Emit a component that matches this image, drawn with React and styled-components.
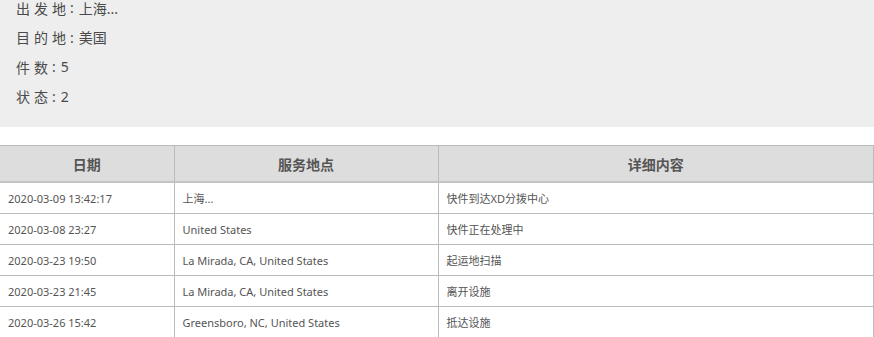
import React from 'react'
import styled, { createGlobalStyle } from 'styled-components'

const GlobalStyle = createGlobalStyle`
  html, body {
    margin: 0;
    padding: 0;
    background: #fff;
    overflow: hidden;
  }
  body {
    font-family: "Noto Sans", "Noto Sans CJK SC", sans-serif;
  }
`

const info = [
  { label: '出发地', value: '上海...' },
  { label: '目的地', value: '美国' },
  { label: '件数', value: '5' },
  { label: '状态', value: '2' }
]

const rows = [
  ['2020-03-09 13:42:17', '上海...', '快件到达XD分拨中心'],
  ['2020-03-08 23:27', 'United States', '快件正在处理中'],
  ['2020-03-23 19:50', 'La Mirada, CA, United States', '起运地扫描'],
  ['2020-03-23 21:45', 'La Mirada, CA, United States', '离开设施'],
  ['2020-03-26 15:42', 'Greensboro, NC, United States', '抵达设施']
]

export default function App() {
  return (
    <Page>
      <GlobalStyle />
      <Summary>
        <InfoList>
          {info.map(item => (
            <InfoLine key={item.label}>
              <Label>{item.label}</Label>
              <Colon>:</Colon>
              <span>{item.value}</span>
            </InfoLine>
          ))}
        </InfoList>
      </Summary>

      <Table>
        <colgroup>
          <col style={{ width: 174 }} />
          <col style={{ width: 264 }} />
          <col />
        </colgroup>
        <thead>
          <tr>
            <Th>日期</Th>
            <Th>服务地点</Th>
            <Th>详细内容</Th>
          </tr>
        </thead>
        <tbody>
          {rows.map((r, i) => (
            <tr key={i}>
              {r.map((c, j) => (
                <Td key={j}>{c}</Td>
              ))}
            </tr>
          ))}
        </tbody>
      </Table>
    </Page>
  )
}

const Page = styled.div`
  width: 874px;
  height: 337px;
  overflow: hidden;
`

const Summary = styled.div`
  background: #eeeeee;
  height: 127px;
  overflow: hidden;
  margin-bottom: 18px;
`

const InfoList = styled.div`
  margin-top: -7px;
  padding-left: 16px;
`

const InfoLine = styled.div`
  display: flex;
  align-items: center;
  height: 29.5px;
  font-size: 14px;
  color: #4a4a4a;
`

const Label = styled.span`
  letter-spacing: 4px;
`

const Colon = styled.span`
  margin: 0 5px 0 0;
`

const Table = styled.table`
  width: 874px;
  border-collapse: collapse;
  table-layout: fixed;
  font-family: "Noto Sans", "Noto Sans CJK SC", sans-serif;
`

const Th = styled.th`
  height: 35px;
  padding: 0;
  background: #dddddd;
  border: 1px solid #bbbbbb;
  border-bottom: 2px solid #c4c4c4;
  font-size: 14px;
  font-weight: bold;
  color: #555;
  text-align: center;
  &:first-child { border-left: none; }
`

const Td = styled.td`
  height: 30px;
  padding: 0 0 0 8px;
  border: 1px solid #bbbbbb;
  font-size: 11px;
  color: #555;
  white-space: nowrap;
  &:first-child { border-left: none; }
`
